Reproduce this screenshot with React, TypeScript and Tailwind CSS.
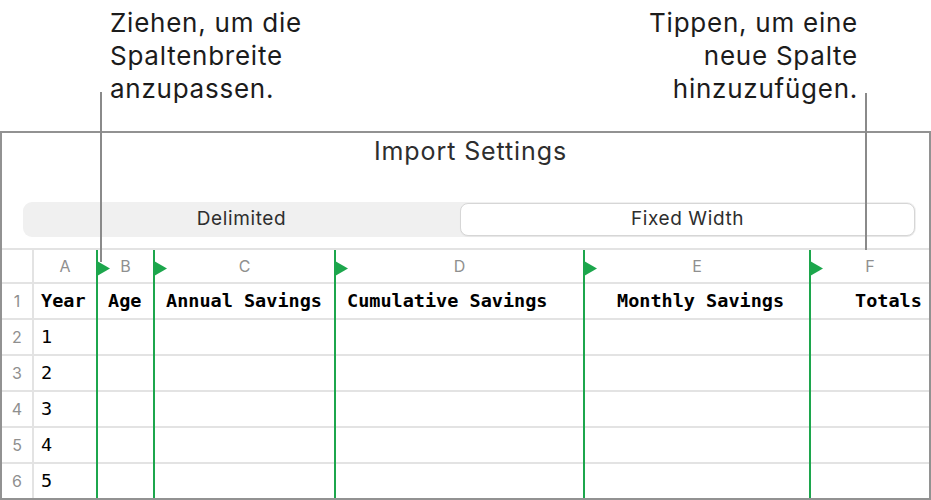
const sans = "font-['Inter','Noto_Sans',sans-serif]";
const mono = "font-['DejaVu_Sans_Mono','Liberation_Mono',monospace]";

type Col = {
  letter: string;
  width: string;
  head: string;
  pad: string;
  marker: boolean;
  values?: string[];
};

const COLS: Col[] = [
  { letter: 'A', width: 'w-[62px]', head: 'Year', pad: 'pl-[7px]', marker: false, values: ['1', '2', '3', '4', '5'] },
  { letter: 'B', width: 'w-[57px]', head: 'Age', pad: 'pl-[10px]', marker: true },
  { letter: 'C', width: 'w-[181px]', head: 'Annual Savings', pad: 'pl-[11px]', marker: true },
  { letter: 'D', width: 'w-[249px]', head: 'Cumulative Savings', pad: 'pl-[11px]', marker: true },
  { letter: 'E', width: 'w-[226px]', head: 'Monthly Savings', pad: 'pl-[32px]', marker: true },
  { letter: 'F', width: 'flex-1', head: 'Totals', pad: 'pl-[44px]', marker: true },
];

const ROWS = [1, 2, 3, 4, 5, 6];

function Marker() {
  return (
    <svg className="absolute left-[-1px] top-[11px]" width="13" height="15" viewBox="0 0 13 15">
      <path d="M0 0 L13 7.5 L0 15 Z" fill="#1ca64c" />
    </svg>
  );
}

function Cell({ last, className, children }: { last: boolean; className?: string; children?: React.ReactNode }) {
  return (
    <div className={`flex items-center ${last ? 'h-[34px]' : 'h-[36px] border-b-2 border-[#e3e3e3]'} ${className ?? ''}`}>
      {children}
    </div>
  );
}

export default function App() {
  return (
    <div className={`relative w-[931px] h-[500px] bg-white overflow-hidden ${sans}`}>
      {/* callouts */}
      <div className="h-[131px] flex justify-between text-[26px] leading-[33px] tracking-[0.75px] text-[#1c1c1c]">
        <div className="pl-[110px] pt-[6px]">
          Ziehen, um die
          <br />
          Spaltenbreite
          <br />
          anzupassen.
        </div>
        <div className="pr-[73px] pt-[6px] text-right">
          Tippen, um eine
          <br />
          neue Spalte
          <br />
          hinzuzufügen.
        </div>
      </div>

      {/* import settings panel */}
      <div className="h-[369px] border-2 border-[#929292] overflow-hidden flex flex-col">
        <div className="pt-[3px] h-[33px] text-center text-[25px] leading-[30px] tracking-[0.9px] text-[#2e2e2e] pl-[10px]">
          Import Settings
        </div>

        <div className="mt-[36px] pl-[21px] pr-[13px]">
          <div className="flex h-[35px] rounded-[9px] bg-[#f0f0f0] p-[1px] pl-0 text-[19px] tracking-[0.6px] text-[#2e2e2e]">
            <div className="flex-1 flex items-center justify-center">Delimited</div>
            <div className="w-[455px] flex items-center justify-center rounded-[8px] bg-white border border-[#d6d6d6] shadow-[0_1px_1px_rgba(0,0,0,0.04)]">
              Fixed Width
            </div>
          </div>
        </div>

        <div className="mt-[11px] border-t-2 border-[#e3e3e3] flex flex-1">
          {/* row numbers */}
          <div className="w-[32px] border-r-2 border-[#e3e3e3] flex flex-col text-[16px] text-[#8f8f8f]">
            <div className="h-[34px] border-b-2 border-[#e3e3e3]" />
            {ROWS.map((r) => (
              <Cell key={r} last={r === 6} className="justify-center">
                {r}
              </Cell>
            ))}
          </div>

          {COLS.map((c) => (
            <div
              key={c.letter}
              className={`${c.width} flex flex-col ${c.marker ? 'border-l-2 border-[#1ca64c]' : ''}`}
            >
              <div className="relative h-[34px] border-b-2 border-[#e3e3e3] flex items-center justify-center text-[16px] text-[#8f8f8f]">
                {c.marker && <Marker />}
                {c.letter}
              </div>
              {ROWS.map((r) => (
                <Cell key={r} last={r === 6} className={`${c.pad} ${mono} text-[18.5px] text-black`}>
                  {r === 1 ? (
                    <span className="font-bold whitespace-pre">{c.head}</span>
                  ) : (
                    c.values?.[r - 2]
                  )}
                </Cell>
              ))}
            </div>
          ))}
        </div>
      </div>

      {/* callout leader lines */}
      <div className="absolute left-[100px] top-[92px] w-[2px] h-[170px] bg-[#8a8a8a]" />
      <div className="absolute left-[865px] top-[93px] w-[2px] h-[157px] bg-[#8a8a8a]" />
    </div>
  );
}
